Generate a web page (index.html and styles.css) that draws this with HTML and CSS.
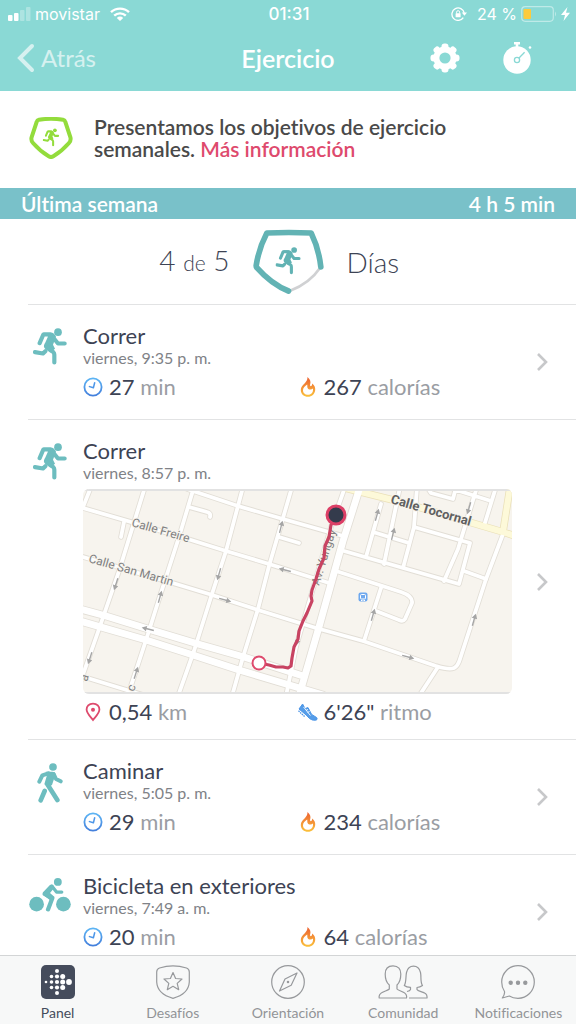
FILE: index.html
```html
<!DOCTYPE html>
<html lang="es">
<head>
<meta charset="utf-8">
<meta name="viewport" content="width=device-width, initial-scale=1">
<title>Ejercicio</title>
<link rel="stylesheet" href="styles.css">
</head>
<body>
<svg class="defs" aria-hidden="true">
  <defs>
    <linearGradient id="blue" x1="0" y1="0" x2="0" y2="1"><stop offset="0" stop-color="#5cb4f4"/><stop offset="1" stop-color="#4480dc"/></linearGradient>
    <linearGradient id="fire" x1="0" y1="0" x2="0" y2="1"><stop offset="0" stop-color="#ec5f30"/><stop offset="1" stop-color="#fbc23c"/></linearGradient>
    <symbol id="run" viewBox="0 0 102 110">
      <circle cx="75" cy="12" r="11.5" fill="currentColor"/>
      <path d="M30 13H53C60 13 65 18 69 25L60 50L66 62L52 74L35 60C30 54 34 48 37 43L45 25Z" fill="currentColor"/>
      <path d="M20 45L31 19H52M58 25L75 46H95M42 57L61 72Q64 75 64 80V103M6 72L30 76L37 69" fill="none" stroke="currentColor" stroke-width="12.5" stroke-linecap="round" stroke-linejoin="round"/>
    </symbol>
    <symbol id="walk" viewBox="0 0 78 120">
      <circle cx="48" cy="12" r="11.5" fill="currentColor"/>
      <path d="M26 26H46Q53 26 56 33L45 66L34 73L22 64L30 36Z" fill="currentColor"/>
      <path d="M7 56L16 37L34 31M50 33L57 48L71 55" fill="none" stroke="currentColor" stroke-width="12" stroke-linecap="round" stroke-linejoin="round"/>
      <path d="M32 65L61 111M23 84L11 112" fill="none" stroke="currentColor" stroke-width="14" stroke-linecap="round"/>
    </symbol>
    <symbol id="bike" viewBox="0 0 128 104">
      <circle cx="23" cy="80" r="22.5" fill="currentColor"/><circle cx="105" cy="80" r="22.5" fill="currentColor"/><circle cx="88" cy="12" r="12" fill="currentColor"/>
      <path d="M42 44L63 22Q68 18 74 22L78 29L64 46L78 58L70 72L46 54Q40 50 42 44Z" fill="currentColor"/>
      <path d="M70 25L84 43H100" fill="none" stroke="currentColor" stroke-width="10" stroke-linecap="round" stroke-linejoin="round"/>
      <path d="M48 49L71 62L58 96" fill="none" stroke="currentColor" stroke-width="13" stroke-linecap="round" stroke-linejoin="round"/>
    </symbol>
    <symbol id="clock" viewBox="0 0 20 20">
      <circle cx="10" cy="10" r="8.600" fill="none" stroke="url(#blue)" stroke-width="1.800"/>
      <path d="M11.800 5.200L10.400 10.800L5.800 9.400" fill="none" stroke="#4c96e8" stroke-width="1.500" stroke-linejoin="round"/>
    </symbol>
    <symbol id="flame" viewBox="0 0 16 20">
      <path fill-rule="evenodd" fill="url(#fire)" d="M7.500 0C10.500 2.500 11 5 10 8Q10 9.500 11.200 9Q12.300 8.500 12.200 6.500C14.500 8.500 15.500 10.500 15.200 13C14.800 17 11.800 19.800 8 19.800C4 19.800 .8 17 .8 13C.8 7.500 8 6 7.500 0ZM7.200 7.500C5 9 3 10.500 3 13.200C3 16 5.300 17.800 8 17.800C10.800 17.800 13 16 13 12.800V11.500C11.500 13 8.500 13 7.600 11C7.100 9.800 7.500 8.800 7.200 7.500Z"/>
    </symbol>
    <symbol id="chevron" viewBox="0 0 12 20"><path d="M2 2L10 10L2 18" fill="none" stroke="currentColor" stroke-width="2.600"/></symbol>
    <symbol id="oneway" viewBox="-7 -4 14 8" overflow="visible"><path d="M-6 0H3" stroke="#a5a5a5" stroke-width="1.400"/><path d="M1.500 -2.800L6.500 0L1.500 2.800Z" fill="#a5a5a5"/></symbol>
  </defs>
</svg>

<div class="app">
  <header class="top">
    <div class="status">
      <div class="status-left">
        <svg class="signal" viewBox="0 0 23 14"><g fill="#fff"><rect y="8" width="4.500" height="6" rx="1"/><rect x="6" y="6" width="4.500" height="8" rx="1"/><g opacity=".3"><rect x="12" y="3" width="4.500" height="11" rx="1"/><rect x="18" width="4.500" height="14" rx="1"/></g></g></svg>
        <span>movistar</span>
        <svg class="wifi" viewBox="0 0 20 14"><g fill="none" stroke="#fff" stroke-width="2.400"><path d="M1 5.200A13 13 0 0 1 19 5.200"/><path d="M4.200 8.700A8.400 8.400 0 0 1 15.800 8.700"/></g><path d="M10 14L6.800 10.900A4.600 4.600 0 0 1 13.200 10.900Z" fill="#fff"/></svg>
      </div>
      <span class="time">01:31</span>
      <div class="status-right">
        <svg class="lock" viewBox="0 0 16 14"><path d="M12.300 10.600A6.200 6.200 0 1 1 13.200 6" fill="none" stroke="#fff" stroke-width="1.300"/><path d="M10.800 5.500H16L13.400 8.800Z" fill="#fff"/><rect x="4.600" y="6.300" width="5" height="4" rx=".5" fill="#fff"/><path d="M5.600 6.500V5.200A1.500 1.500 0 0 1 8.600 5.200V6.500" fill="none" stroke="#fff"/></svg>
        <span>24 %</span>
        <svg class="battery" viewBox="0 0 36 16"><rect x=".7" y=".7" width="31.600" height="14.600" rx="3.500" fill="none" stroke="#fff" stroke-opacity=".45" stroke-width="1.200"/><path d="M34 5.500Q36 8 34 10.500Z" fill="#fff" opacity=".45"/><rect x="2.500" y="3" width="7.500" height="10" rx="1" fill="#fccb3d"/></svg>
        <svg class="bolt" viewBox="0 0 9 14"><path d="M6.500 0L0 8H4L2.500 14L9 5.800H5Z" fill="#fff"/></svg>
      </div>
    </div>
    <nav class="nav">
      <button class="back" type="button"><svg viewBox="0 0 18 30"><path d="M15 3L3 15L15 27" fill="none" stroke="currentColor" stroke-width="4" stroke-linecap="round"/></svg>Atrás</button>
      <h1>Ejercicio</h1>
      <div class="actions">
        <button type="button" aria-label="Ajustes"><svg viewBox="0 0 30 30"><g fill="#fff"><g id="teeth"><rect x="11.500" y=".5" width="7" height="29" rx="3"/><rect x=".5" y="11.500" width="29" height="7" rx="3"/></g><use href="#teeth" transform="rotate(45 15 15)"/></g><circle cx="15" cy="15" r="8.600" fill="none" stroke="#fff" stroke-width="6"/><circle cx="15" cy="15" r="5.600" fill="#8ad9d5"/></svg></button>
        <button type="button" aria-label="Cronómetro"><svg viewBox="0 0 30 32"><circle cx="15" cy="18" r="13.700" fill="#fff"/><path d="M12 1.200H18M15 1V5" stroke="#fff" stroke-width="2.600"/><circle cx="28" cy="5.500" r="1.300" fill="#fff"/><circle cx="15" cy="18" r="2.600" fill="none" stroke="#8ad9d5" stroke-width="1.300"/><path d="M17 16L22.600 10.200" stroke="#8ad9d5" stroke-width="1.300"/></svg></button>
      </div>
    </nav>
  </header>

  <main class="content">
    <section class="banner">
      <svg class="banner-badge" viewBox="0 0 132 126"><path d="M30 8Q66 3 102 8C106 9 108 11 109 15L124 60Q127 70 120 78Q98 103 73 118Q66 122 59 118Q34 103 12 78Q5 70 8 60L23 15C24 11 26 9 30 8Z" fill="none" stroke="#93dc3c" stroke-width="12"/><use href="#run" x="41" y="33" width="50" height="56" color="#93dc3c"/></svg>
      <p>Presentamos los objetivos de ejercicio semanales. <a href="#objetivos">Más información</a></p>
    </section>

    <section>
      <header class="week"><h2>Última semana</h2><span>4 h 5 min</span></header>
      <div class="goal">
        <p class="goal-count">4 <small>de</small> 5</p>
        <svg class="goal-badge" viewBox="0 0 230 210"><path d="M210 122Q178 169 120 191" fill="none" stroke="#d0d1d3" stroke-width="8"/><path d="M212 120Q206 65 183 18Q116 15 50 18Q26 64 18 116Q18 120 20 122Q64 172 115 192" fill="none" stroke="#62b3b4" stroke-width="17" stroke-linecap="round" stroke-linejoin="round"/><use href="#run" x="76" y="58" width="76" height="86" color="#62b3b4"/></svg>
        <p class="goal-unit">Días</p>
      </div>
    </section>

    <ul class="list">
      <li><a class="row" href="#correr-935">
        <span class="kind"><svg class="ic-run"><use href="#run"/></svg></span>
        <span class="body">
          <strong>Correr</strong><span class="when">viernes, 9:35 p. m.</span>
          <span class="metrics"><span class="metric"><svg><use href="#clock"/></svg><span><b>27</b> min</span></span><span class="metric"><svg><use href="#flame"/></svg><span><b>267</b> calorías</span></span></span>
        </span>
        <svg class="go"><use href="#chevron"/></svg>
      </a></li>
      <li><a class="row with-map" href="#correr-857">
        <span class="kind"><svg class="ic-run"><use href="#run"/></svg></span>
        <span class="body">
          <strong>Correr</strong><span class="when">viernes, 8:57 p. m.</span>
          <svg class="map" viewBox="0 0 429 205">
            <defs>
              <g id="streets">
                <path d="M0 19L48 33L108 51L143 62L186 75L246 94M0 68L93 95L126 105L175 121L233 139L280 152L353 177Q366 181 371 179Q375 177 377 170L403 90L420 45M104 0L155 17L200 30L260 47M196 48L216 54"/>
                <path d="M8 -2L0 18M62 -2L36 82L16 140L-3 194M111 -2L96 48L76 110L64 148L45 206M160 -2L143 62L128 108L111 162L95 207M209 -2L186 77L175 120L160 168L149 207M262 -2L248 38L213 158L203 207M-2 187L60 206"/>
                <path d="M41 33L38 48M106 18L124 23Q128 24 127 28"/>
                <path d="M261 62L376 95L387 54L331 38M290 43L326 54M298 15L283 68M317 -2L301 75M334 -2L331 38L320 79M394 -2L375 60L361 92M413 -2L401 37M344 -2L348 4L370 10L373 -2M370 0L408 12M381 82L403 90"/>
                <path d="M253 82L318 103Q330 107 329 114L322 130Q320 133 316 131L293 122M298 99L281 152M355 178L336 207"/>
              </g>
              <g id="avenues"><path d="M-3 120L23 127L65 140L115 155L161 168L220 187M-3 132L63 151L110 166L156 181L240 206M277 -2L260 52L236 138L216 207"/></g>
              <g id="main"><path d="M262 -1L318 13L420 43L432 47M427 -2L420 43"/></g>
            </defs>
            <rect width="429" height="205" fill="#f7f4ee"/>
            <g fill="none" stroke-linecap="round" stroke-linejoin="round">
              <use href="#streets" stroke="#e2ded6" stroke-width="5.500"/><use href="#avenues" stroke="#e2ded6" stroke-width="8.500"/><use href="#main" stroke="#eae0b8" stroke-width="7.500"/>
              <use href="#streets" stroke="#fff" stroke-width="3.800"/><use href="#main" stroke="#fdf9d9" stroke-width="6"/><use href="#avenues" stroke="#fff" stroke-width="6.800"/>
            </g>
            <g>
              <use href="#oneway" transform="translate(33 95) rotate(108)" x="-7" y="-4" width="14" height="8"/>
              <use href="#oneway" transform="translate(77 108) rotate(-74)" x="-7" y="-4" width="14" height="8"/>
              <use href="#oneway" transform="translate(136 85) rotate(106)" x="-7" y="-4" width="14" height="8"/>
              <use href="#oneway" transform="translate(142 111) rotate(15)" x="-7" y="-4" width="14" height="8"/>
              <use href="#oneway" transform="translate(65 140) rotate(194)" x="-7" y="-4" width="14" height="8"/>
              <use href="#oneway" transform="translate(7 169) rotate(108)" x="-7" y="-4" width="14" height="8"/>
              <use href="#oneway" transform="translate(53 184) rotate(-72)" x="-7" y="-4" width="14" height="8"/>
              <use href="#oneway" transform="translate(198 38) rotate(-76)" x="-7" y="-4" width="14" height="8"/>
              <use href="#oneway" transform="translate(202 81) rotate(194)" x="-7" y="-4" width="14" height="8"/>
              <use href="#oneway" transform="translate(294 26) rotate(-74)" x="-7" y="-4" width="14" height="8"/>
              <use href="#oneway" transform="translate(310 45) rotate(-76)" x="-7" y="-4" width="14" height="8"/>
              <use href="#oneway" transform="translate(386 19) rotate(106)" x="-7" y="-4" width="14" height="8"/>
              <use href="#oneway" transform="translate(290 126) rotate(-74)" x="-7" y="-4" width="14" height="8"/>
              <use href="#oneway" transform="translate(391 131) rotate(-74)" x="-7" y="-4" width="14" height="8"/>
              <use href="#oneway" transform="translate(325 168) rotate(15)" x="-7" y="-4" width="14" height="8"/>
              <use href="#oneway" transform="translate(215 150) rotate(104)" x="-7" y="-4" width="14" height="8"/>
            </g>
            <g class="street-names">
              <text transform="translate(48 37) rotate(16)">Calle Freire</text>
              <text transform="translate(5 73) rotate(16)">Calle San Martin</text>
              <text transform="translate(236 97) rotate(-73)">Av. Yungay</text>
              <text transform="translate(51 203) rotate(-72)">c</text>
              <text transform="translate(4 193) rotate(-72)">a</text>
              <text class="major" transform="translate(307 14) rotate(16)">Calle Tocornal</text>
            </g>
            <rect x="275.500" y="103.500" width="9" height="9" rx="2" fill="#6ea8ee"/><rect x="277.500" y="105.500" width="5" height="4.500" rx="1" fill="none" stroke="#fff"/><path d="M278 111.500H279.500M280.500 111.500H282" stroke="#fff"/>
            <path d="M253 28L248 36L246 48L242 57L241 69L236 80L233 90L229 101L228 107L229 112L224 124L220 132L216 142L215 150L211 158L209 169L208 177L205 179L200 178L193 178L186 176L176 174" fill="none" stroke="#c84362" stroke-width="3.200" stroke-linejoin="round"/>
            <circle cx="176" cy="174" r="6.500" fill="#fff" stroke="#de4a6d" stroke-width="2"/>
            <circle cx="253" cy="26" r="9" fill="#343b4c" stroke="#dc3f66" stroke-width="3"/>
            <path d="M0 1H429M0 204H429" stroke="#e2e2e2" stroke-width="2"/>
          </svg>
          <span class="metrics"><span class="metric"><svg viewBox="0 0 20 20"><path d="M10 1.600C5.800 1.600 3.600 4.600 3.600 7.600C3.600 11.600 8.300 15.600 10 18C11.700 15.600 16.400 11.600 16.400 7.600C16.400 4.600 14.200 1.600 10 1.600Z" fill="none" stroke="#de4a6d" stroke-width="1.800"/><circle cx="10" cy="7.800" r="2" fill="#de4a6d"/></svg><span><b>0,54</b> km</span></span><span class="metric"><svg viewBox="0 0 20 20"><path d="M1 7L4.600 2L7 6.600L10 5.600L13.600 12.400L18.600 15.500Q20.200 18 17 18.200Q13.500 18.500 11.500 16.500L8.200 13Z" fill="#559de9" stroke="#4b95e7" stroke-linejoin="round"/><path d="M.8 9L8.200 15.600Q11 18.800 14 18.800M5.600 5L12.400 13.500M8 8.500L10 7.400M9.600 10.500L11.600 9.400" fill="none" stroke="#fff" stroke-width=".9"/><path d="M.5 8.800L6.800 14.800" stroke="#4b95e7" stroke-width="1.300" stroke-dasharray="1.500 .8"/></svg><span><b>6'26"</b> ritmo</span></span></span>
        </span>
        <svg class="go"><use href="#chevron"/></svg>
      </a></li>
      <li><a class="row" href="#caminar-505">
        <span class="kind"><svg class="ic-walk"><use href="#walk"/></svg></span>
        <span class="body">
          <strong>Caminar</strong><span class="when">viernes, 5:05 p. m.</span>
          <span class="metrics"><span class="metric"><svg><use href="#clock"/></svg><span><b>29</b> min</span></span><span class="metric"><svg><use href="#flame"/></svg><span><b>234</b> calorías</span></span></span>
        </span>
        <svg class="go"><use href="#chevron"/></svg>
      </a></li>
      <li><a class="row" href="#bicicleta-749">
        <span class="kind"><svg class="ic-bike"><use href="#bike"/></svg></span>
        <span class="body">
          <strong>Bicicleta en exteriores</strong><span class="when">viernes, 7:49 a. m.</span>
          <span class="metrics"><span class="metric"><svg><use href="#clock"/></svg><span><b>20</b> min</span></span><span class="metric"><svg><use href="#flame"/></svg><span><b>64</b> calorías</span></span></span>
        </span>
        <svg class="go"><use href="#chevron"/></svg>
      </a></li>
    </ul>
  </main>

  <nav class="tabs">
    <a class="active" href="#panel"><svg viewBox="0 0 34 34"><rect width="34" height="34" rx="5" fill="#454c5c"/><g fill="#fff"><circle cx="5" cy="17" r="1.300"/><circle cx="10.500" cy="11.500" r="1.800"/><circle cx="10.500" cy="17" r="1.800"/><circle cx="10.500" cy="22.500" r="1.800"/><circle cx="16" cy="6" r="2"/><circle cx="16" cy="11.500" r="2.100"/><circle cx="16" cy="17" r="2.100"/><circle cx="16" cy="22.500" r="2.100"/><circle cx="16" cy="28" r="2"/><circle cx="21.700" cy="11.500" r="2.500"/><circle cx="21.700" cy="17" r="2.500"/><circle cx="21.700" cy="22.500" r="2.500"/><circle cx="28" cy="17" r="2.900"/></g></svg>Panel</a>
    <a href="#desafios"><svg viewBox="0 0 34 34"><path d="M3.500 3Q17 -1.200 30.500 3Q33.300 4 33.300 7V17Q32.600 29 17 33.300Q1.400 29 .7 17V7Q.7 4 3.500 3Z"/><path d="M17 7.500L19.600 13.500L26 14L21.200 18.400L22.700 24.700L17 21.300L11.300 24.700L12.800 18.400L8 14L14.400 13.500Z"/></svg>Desafíos</a>
    <a href="#orientacion"><svg viewBox="0 0 34 34"><circle cx="17" cy="17" r="16.300"/><path d="M26 8L20.200 20.200L8.500 26L14 14Z"/><circle cx="17" cy="17" r=".7"/></svg>Orientación</a>
    <a href="#comunidad"><svg class="wide" viewBox="0 0 50 34"><path d="M15 .8C9.500 .8 7.200 4.500 7.200 9C7.200 13 8.300 17.500 11.300 20V24C9.500 26 3 26.500 1.500 30Q.8 32 1.200 33H28.500Q29 32 28.300 30C27 26.500 20.500 26 19 24V20C21.700 17.500 22.800 13 22.800 9C22.800 4.500 20.500 .8 15 .8Z"/><path d="M31 33H49Q49.400 30 47.500 28.600C45 26.500 39.600 26.500 39 24.500V22.500Q42 22.300 44.500 20.500C42 17 43.500 12 42.500 7.500Q41 1.200 35.500 1.200Q30 1.200 28.500 7.500C27.500 12 28.500 17 26.300 20.500Q28.500 22.300 32.500 22.300V24.500Q32 26 29 26.500"/></svg>Comunidad</a>
    <a href="#notificaciones"><svg viewBox="0 0 34 34"><path d="M3.500 26.500Q.7 22.500 .7 17A16.300 16.300 0 1 1 17 33.300Q12 33.300 8.300 31L1.300 33Q4 29.500 3.500 26.500Z"/><g fill="#97999c"><circle cx="9.700" cy="17.700" r="1.600"/><circle cx="17" cy="17.700" r="1.600"/><circle cx="24.300" cy="17.700" r="1.600"/></g></svg>Notificaciones</a>
  </nav>
</div>
</body>
</html>
```

FILE: styles.css
```css
* { box-sizing: border-box; }

body {
  margin: 0;
  font-family: "Lato", "Open Sans", sans-serif;
  font-variant-ligatures: none;
  color: #3d4354;
  background: #fff;
}

h1, h2, p, ul { margin: 0; padding: 0; }
a { color: inherit; text-decoration: none; }
svg { display: block; flex: none; }
button { border: 0; padding: 0; background: none; color: inherit; font: inherit; }

.defs { position: absolute; width: 0; height: 0; }

.app { display: flex; flex-direction: column; height: 100vh; }

/* Header */
.top { flex: none; background: #8ad9d5; color: #fff; }

.status {
  display: grid;
  grid-template-columns: 1fr auto 1fr;
  align-items: center;
  height: 28px;
  padding: 0 6px 0 8px;
  font: 400 16px/20px "Inter", sans-serif;
}
.status-left, .status-right { display: flex; align-items: center; gap: 4px; }
.status-right { justify-content: flex-end; }
.time { font-weight: 500; font-size: 17px; }
.signal { width: 23px; height: 14px; }
.wifi { width: 20px; height: 14px; margin-left: 6px; }
.lock { width: 16px; height: 14px; margin-right: 6px; }
.battery { width: 36px; height: 16px; }
.bolt { width: 9px; height: 14px; }

.nav {
  display: grid;
  grid-template-columns: 1fr auto 1fr;
  align-items: center;
  height: 63px;
  padding-bottom: 3px;
}
.nav h1 { grid-column: 2; font-size: 25px; line-height: 30px; font-weight: 600; }
.back { display: flex; align-items: center; gap: 6px; justify-self: start; margin-left: 17px; font-size: 24px; line-height: 30px; opacity: .65; }
.back svg { width: 18px; height: 30px; }
.actions { display: flex; justify-content: flex-end; gap: 42px; padding-right: 44px; }
.actions svg { width: 30px; height: 32px; }

/* Scrolling content */
.content { flex: 1; min-height: 0; overflow-y: auto; scrollbar-width: none; }

.banner { display: flex; align-items: center; gap: 21px; height: 97px; padding: 0 100px 4px 29px; }
.banner-badge { width: 44px; height: 42px; }
.banner p { font-size: 21px; line-height: 22px; font-weight: 600; color: #4a4a4a; }
.banner a { color: #de4a6d; }

.week {
  display: flex;
  justify-content: space-between;
  align-items: center;
  height: 31px;
  padding: 0 21px;
  background: #79c1c9;
  color: #fff;
  font-size: 21px;
  line-height: 24px;
  font-weight: 600;
}
.week h2 { font: inherit; }

.goal {
  display: grid;
  grid-template-columns: 1fr 77px 1fr;
  align-items: center;
  gap: 20px;
  height: 85px;
  font-size: 28px;
  line-height: 32px;
  font-weight: 300;
}
.goal small { font-size: 21px; }
.goal-count { text-align: right; }
.goal-badge { width: 77px; height: 70px; }

/* Exercise list */
.list { list-style: none; margin-left: 28px; }
.list li { border-top: 1px solid #e2e3e4; }
.row { display: flex; align-items: center; padding: 19px 28px 19px 0; }
.kind { align-self: flex-start; display: flex; justify-content: center; width: 43px; padding: 4px 0 0 1px; margin-right: 12px; color: #6dbdbf; }
.ic-run { width: 34px; height: 37px; }
.ic-walk { width: 26px; height: 40px; }
.ic-bike { width: 42px; height: 34px; }
.body { flex: 1; min-width: 0; }
.body strong { display: block; font-size: 22px; line-height: 24px; font-weight: 400; }
.when { display: block; font-size: 16px; line-height: 20px; color: #808287; }
.metrics { display: grid; grid-template-columns: 1fr 1fr; margin-top: 6px; font-size: 22px; line-height: 26px; color: #9a9da3; }
.metric { display: flex; align-items: center; gap: 6px; }
.metric svg { width: 20px; height: 20px; }
.metric b { font-weight: 400; color: #3d4354; }
.go { width: 12px; height: 20px; margin-left: 24px; color: #c7c8ca; }

.map { width: 100%; height: auto; margin-top: 6px; border-radius: 6px; }
.with-map { padding-bottom: 14px; }
.with-map .metrics { margin-top: 5px; }
.street-names { font: 400 12px "Roboto", sans-serif; fill: #808080; stroke: #f7f4ee; stroke-width: 2px; paint-order: stroke; }
.street-names .major { font-size: 13px; font-weight: 700; fill: #606060; }

/* Tab bar */
.tabs {
  flex: none;
  display: grid;
  grid-template-columns: repeat(5, 1fr);
  height: 69px;
  border-top: 1px solid #d3d5d6;
  background: #f7f8f8;
}
.tabs a { display: flex; flex-direction: column; align-items: center; gap: 5px; padding-top: 9px; font-size: 14px; line-height: 18px; color: #929497; }
.tabs a.active { color: #454c5c; }
.tabs svg { width: 34px; height: 34px; fill: none; stroke: #97999c; stroke-width: 1.2px; stroke-linejoin: round; }
.tabs .active svg { stroke: none; }
.tabs .wide { width: 50px; }
```
